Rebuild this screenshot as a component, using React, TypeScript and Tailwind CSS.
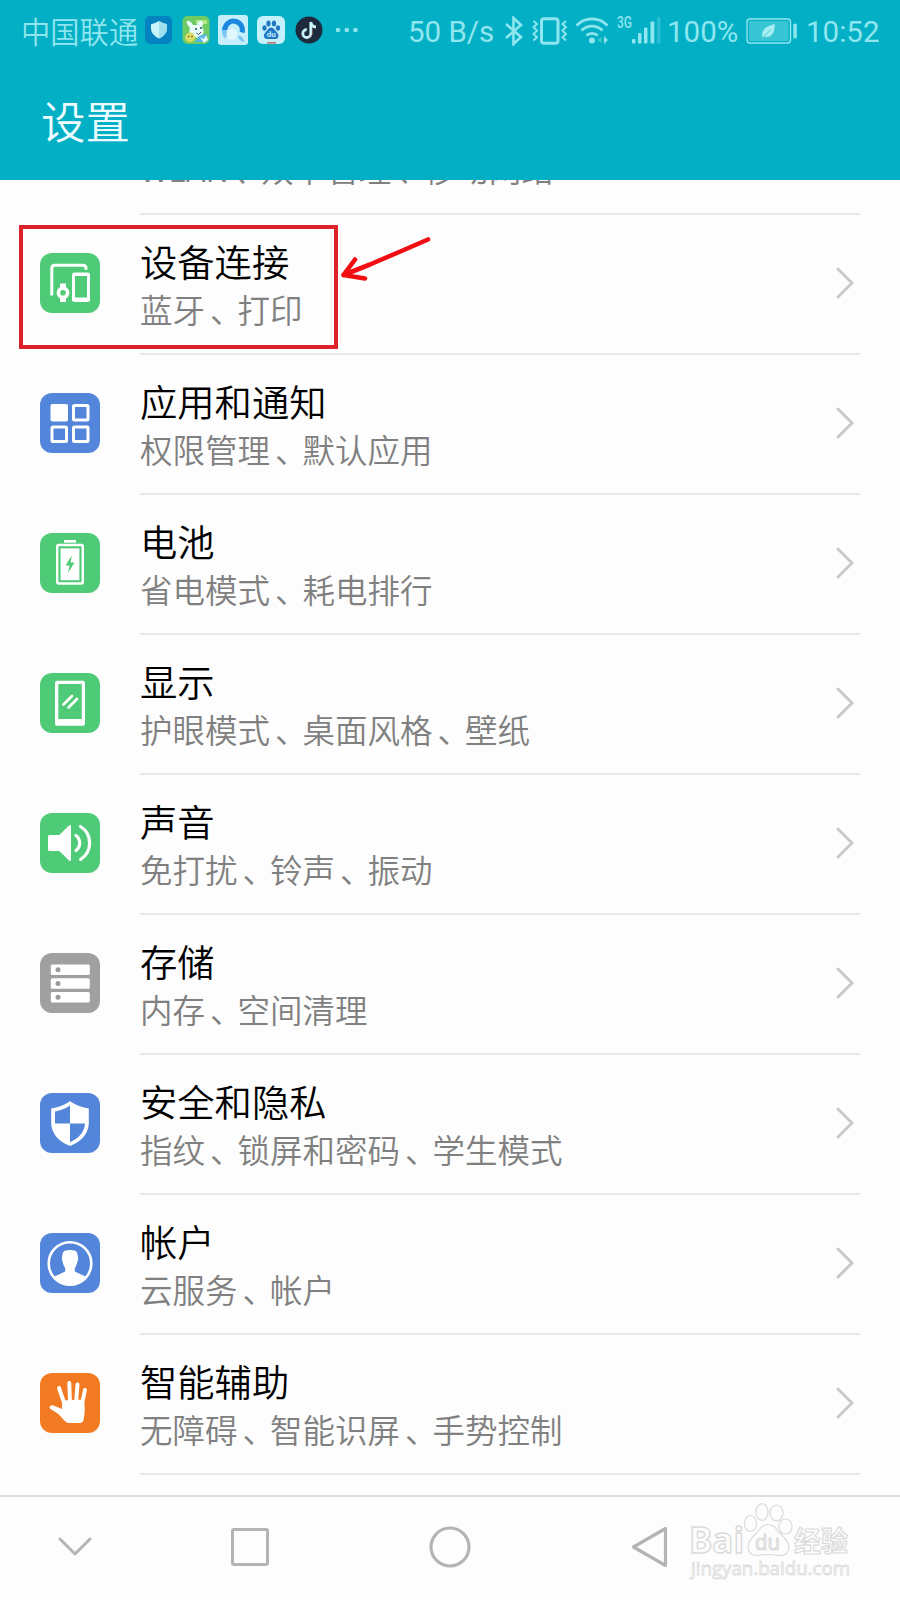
import { Fragment, type ReactNode } from "react";

interface SettingItem {
  title: string;
  desc: string;
  icon: ReactNode;
}

const GREEN = "#4fcb78";
const BLUE = "#5385da";

const tile = (fill: string, children: ReactNode) => (
  <svg viewBox="0 0 60 60" className="w-[60px] h-[60px]" fill="none">
    <rect width="60" height="60" rx="12" fill={fill} />
    {children}
  </svg>
);

const items: SettingItem[] = [
  {
    title: "设备连接",
    desc: "蓝牙、打印",
    icon: tile(
      GREEN,
      <>
        <path d="M11.8 42.5V15.2q0-3 3-3H43q3 0 3 3v1.5" stroke="#fff" strokeWidth="3" />
        <path d="M20 30.5h6v5h-6zM20 44.5h6V49h-6z" fill="#fff" />
        <circle cx="23" cy="39.8" r="4.6" stroke="#fff" strokeWidth="3.6" />
        <path
          fillRule="evenodd"
          d="M34.5 19.5h13q2.5 0 2.5 2.5v24.5q0 2.5-2.5 2.5h-13q-2.5 0-2.5-2.500V22q0-2.5 2.5-2.5zM35 23v21.500h12V23z"
          fill="#fff"
        />
      </>
    ),
  },
  {
    title: "应用和通知",
    desc: "权限管理、默认应用",
    icon: tile(
      BLUE,
      <>
        <rect x="10.5" y="11" width="17.5" height="17.5" rx="2" fill="#fff" />
        <g stroke="#fff" strokeWidth="3">
          <rect x="33.5" y="12.5" width="14.5" height="14.5" rx="1" />
          <rect x="12" y="34" width="14.5" height="14.5" rx="1" />
          <rect x="33.5" y="34" width="14.5" height="14.5" rx="1" />
        </g>
      </>
    ),
  },
  {
    title: "电池",
    desc: "省电模式、耗电排行",
    icon: tile(
      GREEN,
      <>
        <path d="M24 7h12v2.7H24z" fill="#fff" />
        <rect x="17.2" y="12" width="25.6" height="38.5" rx="1.5" stroke="#fff" strokeWidth="2.4" />
        <rect x="20.6" y="15.4" width="18.8" height="31.8" fill="#fff" />
        <path d="M31.8 22.5 25.5 32.5h4L28 40l6.500-10.500h-4z" fill={GREEN} />
      </>
    ),
  },
  {
    title: "显示",
    desc: "护眼模式、桌面风格、壁纸",
    icon: tile(
      GREEN,
      <>
        <path
          fillRule="evenodd"
          d="M17 7.800h26q2 0 2 2v41q0 2-2 2H17q-2 0-2-2v-41q0-2 2-2zM18.300 11v35h23.400V11z"
          fill="#fff"
        />
        <path d="M23.5 31.5 32 23M28.5 34.5 37 26" stroke="#fff" strokeWidth="2.6" strokeLinecap="round" />
      </>
    ),
  },
  {
    title: "声音",
    desc: "免打扰、铃声、振动",
    icon: tile(
      GREEN,
      <>
        <path d="M9.5 22h9.8L29 12.500q2-1.500 2 .7v33.600q0 2.200-2 .7L19.300 38H9.500q-1.500 0-1.500-1.500v-13q0-1.500 1.500-1.500z" fill="#fff" />
        <path d="M36 22.500a9.500 9.500 0 0 1 0 15M40.500 13.500a19.500 19.500 0 0 1 0 33" stroke="#fff" strokeWidth="3.2" strokeLinecap="round" />
      </>
    ),
  },
  {
    title: "存储",
    desc: "内存、空间清理",
    icon: tile(
      "#a0a0a0",
      <>
        <g fill="#fff">
          <rect x="10.8" y="11.5" width="39" height="10.5" rx="1.5" />
          <rect x="10.8" y="25.3" width="39" height="10.5" rx="1.5" />
          <rect x="10.8" y="39" width="39" height="10.5" rx="1.5" />
        </g>
        <g fill="#999">
          <circle cx="18" cy="16.7" r="2.5" />
          <circle cx="18" cy="30.5" r="2.5" />
          <circle cx="18" cy="44.2" r="2.5" />
        </g>
      </>
    ),
  },
  {
    title: "安全和隐私",
    desc: "指纹、锁屏和密码、学生模式",
    icon: tile(
      BLUE,
      <>
        <path d="M30 8.200q9 6 18.800 7.300v15.500Q47.500 46 30 53 12.500 46 11.200 31V15.500Q21 14.200 30 8.200z" fill="#fff" />
        <path d="M30 12.500V30.500H15V18.500Q23.500 17 30 12.500z" fill={BLUE} />
        <path d="M30 30.500h15Q44 43 30 49.200z" fill={BLUE} />
      </>
    ),
  },
  {
    title: "帐户",
    desc: "云服务、帐户",
    icon: tile(
      BLUE,
      <>
        <circle cx="30" cy="30.5" r="21.3" stroke="#fff" strokeWidth="2.6" />
        <path
          d="M22.500 22q-.5-5 7.500-5t7.500 5l.8 3.500-1.200 4.500q-.8 3-2.300 5v3.500l10.700 5Q39.500 51.500 30 51.500t-15.500-8l10.700-5V35q-1.500-2-2.300-5l-1.200-4.500z"
          fill="#fff"
        />
      </>
    ),
  },
  {
    title: "智能辅助",
    desc: "无障碍、智能识屏、手势控制",
    icon: tile(
      "#f27a22",
      <>
        <g stroke="#fff" strokeWidth="3.9" strokeLinecap="round">
          <path d="m19 15 5.500 16M29.300 10l.7 20M37.500 11.500 36 30M45 16.800 42 31" />
        </g>
        <path
          d="m22.300 27.500 21.500-1 1 8-.3 6.500-1 6q-.7 3-3.500 3H29q-2.500 0-4.500-2.200l-6-6.800-8-5q-2-2 .5-3.500 1.500-.5 3 .3l8 3.200z"
          fill="#fff"
        />
      </>
    ),
  },
];

function StatusBar() {
  return (
    <div className="h-[60px] flex items-center pl-[21px] text-[#90e6ef] whitespace-nowrap">
      <span className="w-[124px] -mt-[1px] text-[29.3px] leading-[40px] font-[350]">中国联通</span>
      <svg viewBox="0 0 28 28" className="w-7 h-7 shrink-0">
        <rect width="27" height="28" rx="5" fill="#0583c1" />
        <path d="M14 5q4 2.500 8 3.200V13q-.5 6-8 9.500Q6.500 19 6 13V8.200Q10 7.500 14 5z" fill="#c8f4fa" />
        <path d="M14 5q4 2.500 8 3.200V13q-.5 6-8 9.500z" fill="#9fe0ee" />
      </svg>
      <svg viewBox="0 0 28 28" className="w-7 h-7 shrink-0 ml-[9px]">
        <rect x=".5" width="27" height="28" rx="5" fill="#6fcb63" />
        <path d="M14 4h11v4H14z" fill="#b4e88c" />
        <path d="M8 12Q3.500 7 5 5q3-1 6 4h4q2-5 5-4 2 2 0 6 4 5-1 9-5 3-9 0-4-3-2-8z" fill="#e7fbf8" />
        <circle cx="14" cy="13" r="1" fill="#24556a" />
        <circle cx="19" cy="12" r="1" fill="#24556a" />
        <path d="m14.500 17 2 1.500L19 16" stroke="#345" strokeWidth="1" fill="none" />
        <circle cx="8" cy="21.5" r="5" fill="#d5da60" />
        <circle cx="6.5" cy="20.5" r=".8" fill="#754" />
        <circle cx="10" cy="20.5" r=".8" fill="#754" />
        <path d="m13 26 4-6 8-2v8z" fill="#59b5e6" />
        <path d="m18 21 4 2 2-4 2 5-4 3z" fill="#e9fbff" />
      </svg>
      <svg viewBox="0 0 30 30" className="w-[30px] h-[30px] shrink-0 ml-2">
        <rect width="30" height="30" rx="3" fill="#c5f0fb" />
        <path d="M6.800 12.500a8.800 8.800 0 0 0 2 9" fill="none" stroke="#7cc6f1" strokeWidth="5" />
        <path d="M6.800 15A8.800 8.800 0 1 1 24 17.500" fill="none" stroke="#1a86df" strokeWidth="5" />
        <circle cx="14" cy="19.5" r="5.5" fill="#e4f8fe" opacity=".85" />
        <path d="M19.500 20.500q5.500-.5 7 6.500Q21.500 27 19.500 20.500z" fill="#7cc6f1" />
      </svg>
      <svg viewBox="0 0 28 28" className="w-7 h-7 shrink-0 ml-[9px]">
        <rect width="28" height="28" rx="6" fill="#c4f1fc" />
        <g fill="#2277c4">
          <ellipse cx="7.5" cy="12" rx="2.1" ry="2.8" />
          <ellipse cx="11.5" cy="7.5" rx="2.1" ry="3" />
          <ellipse cx="17" cy="7.5" rx="2.1" ry="3" />
          <ellipse cx="21" cy="12" rx="2.1" ry="2.8" />
          <path d="M14.200 11.500q2.500 0 4 3 3.500 3 3.300 5.500-.5 3.500-4 3h-6.600q-3.500.5-4-3-.2-2.500 3.300-5.500 1.500-3 4-3z" />
        </g>
        <text x="14.2" y="21.300" fontSize="8" fontWeight="700" textAnchor="middle" fill="#c4f1fc" fontFamily="Roboto">
          du
        </text>
        <path d="M10 26h9v1.600h-9z" fill="#c4726f" />
      </svg>
      <svg viewBox="0 0 28 28" className="w-7 h-7 shrink-0 ml-[10px]">
        <circle cx="14" cy="14" r="13.5" fill="#1d2a3d" />
        <path d="M15.800 6v11.500a4 4 0 1 1-4-4M15.800 6q.6 4.700 5.200 5" fill="none" stroke="#c9f3f8" strokeWidth="2.8" />
        <path d="M17.400 12.500v5a5.500 5.500 0 0 1-4 5" fill="none" stroke="#a66" strokeWidth=".6" />
      </svg>
      <svg viewBox="0 0 24 6" className="w-6 h-1.5 shrink-0 ml-[12px]" fill="currentColor">
        <circle cx="3" cy="3" r="2.3" />
        <circle cx="11.8" cy="3" r="2.3" />
        <circle cx="20.5" cy="3" r="2.3" />
      </svg>

      <span className="w-[96px] ml-[49px] pt-[3px] font-[Roboto] font-normal text-[29.5px] leading-[40px]">50 B/s</span>
      <svg viewBox="0 0 20 30" className="w-5 h-[30px] shrink-0 mt-px" fill="none" stroke="currentColor" strokeWidth="2.6">
        <path d="m2 8 15 13-7.500 7V2L17 9 2 22" />
      </svg>
      <svg viewBox="0 0 36 28" className="w-9 h-7 shrink-0 ml-2 mt-px" fill="none" stroke="currentColor">
        <rect x="9.5" y="1.8" width="16.5" height="24.4" rx="2.5" strokeWidth="3" />
        <path d="m1.500 4 3.500 3-3.500 3.300L5 13.600 1.500 17 5 20.300 1.500 23.500M34 4l-3.500 3 3.500 3.300-3.500 3.300L34 17l-3.500 3.300 3.500 3.200" strokeWidth="2" />
      </svg>
      <svg viewBox="0 0 34 28" className="w-[34px] h-7 shrink-0 ml-[7px]" fill="none" stroke="currentColor" strokeWidth="2.7">
        <path d="M1.500 9.500a21.500 21.500 0 0 1 31 0M6.500 14.500a15 15 0 0 1 21 0M11.300 19.500a8.600 8.600 0 0 1 11.500 0" />
        <circle cx="17" cy="24.5" r="3" fill="currentColor" stroke="none" />
        <path d="m22.500 24 4-3v6z" fill="#41cbd8" stroke="none" />
        <path d="m33 24-4-4v8z" fill="currentColor" stroke="none" />
      </svg>
      <svg viewBox="0 0 46 30" className="w-[46px] h-[30px] shrink-0 ml-[7px] overflow-visible" fill="currentColor">
        <text x="1" y="13" fontSize="16.5" fontWeight="500" fontFamily="Roboto" textLength="15" lengthAdjust="spacingAndGlyphs">
          3G
        </text>
        <rect x="16" y="24" width="3.5" height="4.5" rx="1" />
        <rect x="22" y="18" width="3.5" height="10.5" rx="1" />
        <rect x="28" y="12.5" width="3.5" height="16" rx="1" />
        <rect x="34.5" y="6.5" width="3.8" height="22" rx="1" />
        <rect x="41" y="2" width="3.5" height="26.5" rx="1" opacity=".28" />
      </svg>
      <span className="w-[79px] ml-[5px] pt-[3px] font-[Roboto] font-normal text-[29.5px] leading-[40px]">100%</span>
      <svg viewBox="0 0 52 26" className="w-[52px] h-[26px] shrink-0 mt-px">
        <rect x="1" y="1" width="43.5" height="24" rx="3" fill="none" stroke="currentColor" strokeWidth="1.4" />
        <rect x="3" y="3" width="39.5" height="20" fill="#39c6d4" />
        <rect x="47.3" y="5.5" width="3.5" height="15" rx="1.5" fill="currentColor" />
        <path d="M28.500 6q1 7-3 11-3.500 3-7 1.500l-2 1.500q-1.500-7 3.500-10.500Q23 7.500 28.500 6z" fill="#a8eff3" />
        <path d="m17 19.500 8-8" stroke="#39c6d4" strokeWidth=".9" />
      </svg>
      <span className="ml-[8px] pt-[3px] font-[Roboto] font-normal text-[29.5px] leading-[40px]">10:52</span>
    </div>
  );
}

// Enumeration commas sit a little to the right of their cell
function Desc({ text }: { text: string }) {
  return text.split("、").map((part, i) => (
    <Fragment key={i}>
      {i > 0 && (
        <span className="inline-block w-[32.5px] pl-[5px] [font-feature-settings:'halt']">、</span>
      )}
      {part}
    </Fragment>
  ));
}

function SettingRow({ item }: { item: SettingItem }) {
  return (
    <div className="h-[140px] shrink-0 flex pl-10 pr-10">
      <div className="w-[100px] pt-[38px]">{item.icon}</div>
      <div className="flex-1 flex justify-between border-b-2 border-[#e8e8e8]">
        <div className="pt-[22px] whitespace-nowrap">
          <div className="text-[37.3px] leading-[48px] text-black font-[350]">{item.title}</div>
          <div className="text-[32.5px] leading-[47px] text-[#808080] font-[350]">
            <Desc text={item.desc} />
          </div>
        </div>
        <svg viewBox="0 0 18 32" className="w-[18px] h-8 mt-[52px] mr-[6px]" fill="none">
          <path d="m2 2 14 14L2 30" stroke="#c9c9c9" strokeWidth="3" strokeLinecap="round" />
        </svg>
      </div>
    </div>
  );
}

function Highlight() {
  return (
    <>
      <div className="absolute left-[19px] top-[225px] w-[319px] h-[124px] border-4 border-[#dd2229]" />
      <svg viewBox="0 0 92 46" className="absolute left-[340px] top-[236px] w-[92px] h-[46px]" fill="none">
        <path d="M88 3.500 58 16.500 30 28.500 3.500 39M15 23.500 3.500 39l21.500 3.500" stroke="#f20d12" strokeWidth="4.6" strokeLinecap="round" strokeLinejoin="round" />
      </svg>
    </>
  );
}

function NavBar() {
  return (
    <div className="h-[105px] shrink-0 flex items-center pb-[3px] border-t-2 border-[#dedede] text-[#b4b4b4]">
      <svg viewBox="0 0 34 20" className="w-[34px] h-5 ml-[58px]" fill="none" stroke="currentColor" strokeWidth="3">
        <path d="m2 2 15 15L32 2" strokeLinecap="round" />
      </svg>
      <svg viewBox="0 0 38 38" className="w-[38px] h-[38px] ml-[139px]" fill="none" stroke="currentColor" strokeWidth="3">
        <rect x="1.5" y="1.5" width="35" height="35" rx="1.5" />
      </svg>
      <svg viewBox="0 0 42 42" className="w-[42px] h-[42px] ml-[160px]" fill="none" stroke="currentColor" strokeWidth="3.2">
        <circle cx="21" cy="21" r="19" />
      </svg>
      <svg viewBox="0 0 38 42" className="w-[38px] h-[42px] ml-[160px]" fill="none" stroke="currentColor" strokeWidth="3.2">
        <path d="M34.500 2.500v37L2.500 21z" strokeLinejoin="round" />
      </svg>
      <Watermark />
    </div>
  );
}

function Watermark() {
  return (
    <svg viewBox="0 0 170 84" className="w-[170px] h-[84px] ml-[16px] -mt-[7px] overflow-visible" fill="#fdfdfd" stroke="#dadada" strokeWidth="1.2" strokeLinejoin="round">
      <text x="4" y="51" fontSize="35" fontWeight="700" fontFamily="Open Sans" textLength="55" lengthAdjust="spacingAndGlyphs" strokeWidth="1.4">
        Bai
      </text>
      <ellipse cx="65.5" cy="21.5" rx="6" ry="8" />
      <ellipse cx="77" cy="10" rx="6" ry="8.3" />
      <ellipse cx="91.5" cy="11" rx="6.5" ry="8" />
      <ellipse cx="100.5" cy="24.5" rx="6.5" ry="7.5" />
      <path d="M83 22.500q6 0 10 7 11 9 11 16-1 9-10 8-11-2-22 0-9 0-9-9 0-6 10-15 4-7 10-7z" />
      <text x="82.5" y="48" fontSize="21" fontFamily="Open Sans" textAnchor="middle" textLength="25" lengthAdjust="spacingAndGlyphs">
        du
      </text>
      <text x="109" y="50" fontSize="28" fontWeight="700" fontFamily="Noto Sans CJK SC" textLength="54" lengthAdjust="spacingAndGlyphs">
        经验
      </text>
      <text x="6" y="73" fontSize="18.5" fontFamily="Open Sans" textLength="159" lengthAdjust="spacingAndGlyphs" strokeWidth=".8">
        jingyan.baidu.com
      </text>
    </svg>
  );
}

export default function App() {
  return (
    <div className="relative w-[900px] h-[1600px] flex flex-col overflow-hidden bg-[#fdfdfd] font-['Noto_Sans_CJK_SC',sans-serif]">
      <header className="h-[180px] shrink-0 bg-[#02afc5]">
        <StatusBar />
        <h1 className="pl-[41px] pt-[30px] text-[44.5px] leading-[60px] font-[350] text-[#eefcff]">设置</h1>
      </header>

      <main className="flex-1 overflow-hidden">
        {/* Tail of the row scrolled under the header */}
        <div className="h-[35px] ml-[140px] mr-10 flex items-end overflow-hidden border-b-2 border-[#e8e8e8]">
          <div className="mb-[22px] text-[32.5px] leading-[47px] text-[#808080] font-[350] whitespace-nowrap">
            <Desc text="WLAN、双卡管理、移动网络" />
          </div>
        </div>
        {items.map((item) => (
          <SettingRow key={item.title} item={item} />
        ))}
      </main>

      <NavBar />
      <Highlight />
    </div>
  );
}
